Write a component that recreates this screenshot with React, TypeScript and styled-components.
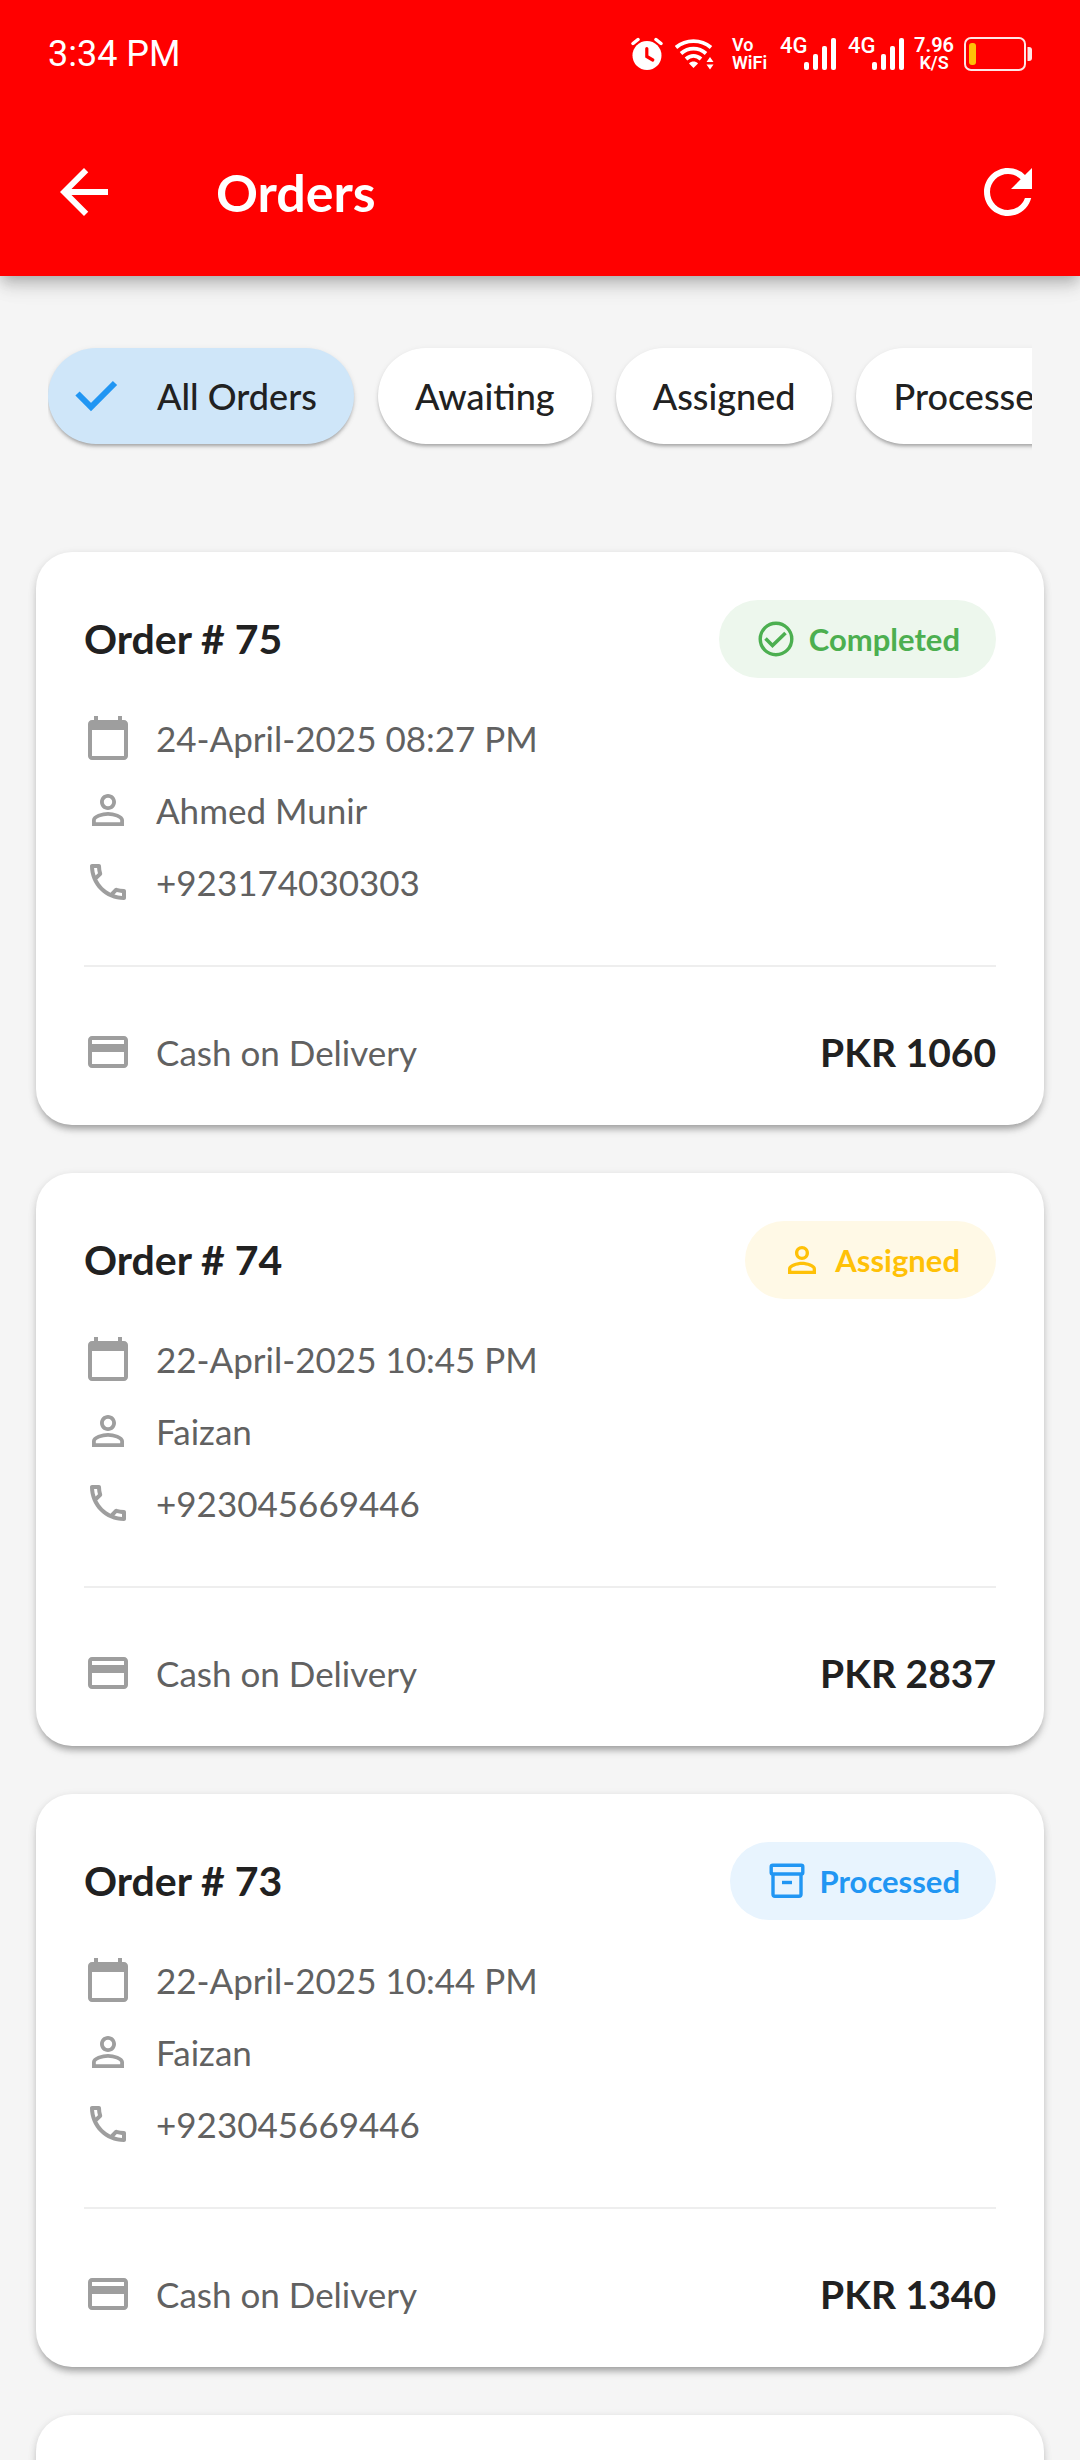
import React, { useState } from 'react';
import styled, { createGlobalStyle } from 'styled-components';
import {
  MdArrowBack,
  MdCalendarToday,
  MdRefresh,
} from 'react-icons/md';

const GlobalStyle = createGlobalStyle`
  *, *::before, *::after { box-sizing: border-box; }
  body {
    margin: 0;
    background: #f5f5f5;
    color: #212121;
    font-family: Lato, "Liberation Sans", sans-serif;
  }
  button { font: inherit; color: inherit; border: 0; padding: 0; background: none; cursor: pointer; }
  h1, h2, p { margin: 0; }
  svg { display: block; flex: none; }
`;

const Screen = styled.div`
  display: flex;
  flex-direction: column;
  height: 100vh;
  overflow: hidden;
`;

const AppBar = styled.header`
  position: relative;
  z-index: 1;
  flex: none;
  background: #ff0000;
  color: #fff;
  box-shadow:
    0 6px 12px -3px rgba(0, 0, 0, 0.2),
    0 12px 15px 0 rgba(0, 0, 0, 0.1),
    0 3px 30px 0 rgba(0, 0, 0, 0.08);
`;

const StatusBar = styled.div`
  display: flex;
  align-items: center;
  justify-content: space-between;
  height: 108px;
  padding: 0 48px;
  font-family: Roboto, "Liberation Sans", sans-serif;
`;

const Clock = styled.time`
  font-size: 36px;
  line-height: 48px;
`;

const StatusIcons = styled.div`
  display: flex;
  align-items: center;
  gap: 12px;
`;

const Stacked = styled.div<{ $align: 'flex-start' | 'center' }>`
  display: flex;
  flex-direction: column;
  align-items: ${({ $align }) => $align};
  width: 36px;
  white-space: nowrap;
  font-weight: 600;
`;

const StackedLine = styled.span<{ $size: number }>`
  font-size: ${({ $size }) => $size}px;
  line-height: 18px;
`;

const Signal = styled.div`
  display: flex;
  align-items: flex-start;
  width: 56px;
  height: 34px;
`;

const SignalLabel = styled.span`
  width: 24px;
  font-size: 22px;
  font-weight: 500;
  line-height: 18px;
`;

const Toolbar = styled.div`
  display: flex;
  align-items: center;
  gap: 96px;
  height: 168px;
  padding: 0 36px 0 48px;
`;

const ToolbarTitle = styled.h1`
  flex: 1;
  font-size: 52px;
  font-weight: 700;
  line-height: 60px;
`;

const IconButton = styled.button`
  flex: none;
  font-size: 72px;
`;

const Filters = styled.div`
  display: flex;
  flex: none;
  gap: 24px;
  margin: 0 48px;
  padding: 72px 0 60px;
  overflow-x: auto;
  scrollbar-width: none;
`;

const Chip = styled.button<{ $selected: boolean }>`
  display: flex;
  flex: none;
  align-items: center;
  gap: 37px;
  height: 96px;
  padding: 0 ${({ $selected }) => ($selected ? '37px 0 24px' : '37px')};
  border-radius: 48px;
  background: ${({ $selected }) => ($selected ? '#cfe6f9' : '#fff')};
  box-shadow:
    0 3px 3px -1px rgba(0, 0, 0, 0.2),
    0 3px 4px 0 rgba(0, 0, 0, 0.1),
    0 1px 6px 0 rgba(0, 0, 0, 0.06);
  font-size: 36px;
  font-weight: 500;
  line-height: 48px;
`;

const OrderList = styled.main`
  display: flex;
  flex: 1;
  flex-direction: column;
  gap: 48px;
  min-height: 0;
  padding: 48px 36px;
  overflow-y: auto;
  scrollbar-width: none;
`;

const Card = styled.article`
  flex: none;
  min-height: 573px;
  padding: 48px;
  border-radius: 36px;
  background: #fff;
  box-shadow:
    0 7px 6px -4px rgba(0, 0, 0, 0.22),
    0 5px 8px 0 rgba(0, 0, 0, 0.13),
    0 2px 10px 0 rgba(0, 0, 0, 0.08);
`;

const CardHeader = styled.div`
  display: flex;
  align-items: center;
  justify-content: space-between;
  height: 78px;
`;

const OrderTitle = styled.h2`
  font-size: 41px;
  font-weight: 700;
  line-height: 48px;
`;

const Badge = styled.span<{ $color: string; $tint: string }>`
  display: flex;
  align-items: center;
  gap: 12px;
  height: 78px;
  padding: 0 36px;
  border-radius: 39px;
  background: ${({ $tint }) => $tint};
  color: ${({ $color }) => $color};
  font-size: 31px;
  font-weight: 700;
  line-height: 48px;
`;

const Details = styled.div`
  display: flex;
  flex-direction: column;
  gap: 24px;
  margin: 36px 0 59px;
`;

const Detail = styled.p`
  display: flex;
  align-items: center;
  gap: 24px;
  color: #616161;
  font-size: 35px;
  line-height: 48px;

  svg {
    color: #9e9e9e;
    font-size: 48px;
  }
`;

const CardFooter = styled.div`
  display: flex;
  align-items: center;
  justify-content: space-between;
  height: 112px;
  padding-top: 60px;
  border-top: 2px solid #eeeeee;
`;

const Price = styled.strong`
  font-size: 39px;
  font-weight: 700;
  line-height: 48px;
`;

function PersonIcon({ size = 48 }: { size?: number }) {
  return (
    <svg width={size} height={size} viewBox="0 0 24 24" fill="currentColor" aria-hidden="true">
      <path d="M12 5.9a2.1 2.1 0 1 1 0 4.2 2.1 2.1 0 0 1 0-4.2m0 9c2.97 0 6.1 1.46 6.1 2.1v1.1H5.9V17c0-.64 3.13-2.1 6.1-2.1M12 4C9.79 4 8 5.79 8 8s1.79 4 4 4 4-1.79 4-4-1.79-4-4-4zm0 9c-2.67 0-8 1.34-8 4v3h16v-3c0-2.66-5.33-4-8-4z" />
    </svg>
  );
}

function PhoneIcon() {
  return (
    <svg width="48" height="48" viewBox="0 0 24 24" fill="currentColor" aria-hidden="true">
      <path d="M6.54 5c.06.89.21 1.76.45 2.59l-1.2 1.2c-.41-1.2-.67-2.47-.76-3.79h1.51m9.86 12.02c.85.24 1.72.39 2.6.45v1.49c-1.32-.09-2.59-.35-3.8-.75l1.2-1.19M7.5 3H4c-.55 0-1 .45-1 1 0 9.39 7.61 17 17 17 .55 0 1-.45 1-1v-3.49c0-.55-.45-1-1-1-1.24 0-2.45-.2-3.57-.57-.1-.04-.21-.05-.31-.05-.26 0-.51.1-.71.29l-2.2 2.2c-2.83-1.45-5.15-3.76-6.59-6.59l2.2-2.2c.28-.28.36-.67.25-1.02C8.7 6.45 8.5 5.25 8.5 4c0-.55-.45-1-1-1z" />
    </svg>
  );
}

function CardIcon() {
  return (
    <svg width="48" height="48" viewBox="0 0 24 24" fill="currentColor" aria-hidden="true">
      <path d="M20 4H4c-1.11 0-1.99.89-1.99 2L2 18c0 1.11.89 2 2 2h16c1.11 0 2-.89 2-2V6c0-1.11-.89-2-2-2zm0 14H4v-6h16v6zm0-10H4V6h16v2z" />
    </svg>
  );
}

function CompletedIcon() {
  return (
    <svg width="42" height="42" viewBox="0 0 42 42" fill="none" stroke="currentColor" aria-hidden="true">
      <circle cx="21" cy="21" r="15.8" strokeWidth="3.4" />
      <path d="M10.5 20.5l7 7L30.5 15" strokeWidth="3.6" />
    </svg>
  );
}

function ArchiveIcon() {
  return (
    <svg width="42" height="42" viewBox="0 0 42 42" fill="none" stroke="currentColor" strokeWidth="3.4" aria-hidden="true">
      <rect x="5.2" y="5.2" width="31.6" height="8.8" rx="1.6" />
      <path d="M7 14v20.2c0 1.2.8 2 2 2h24c1.2 0 2-.8 2-2V14" />
      <path d="M16 22.5h10" />
    </svg>
  );
}

function TickIcon() {
  return (
    <svg width="48" height="48" viewBox="0 0 48 48" fill="none" stroke="#2196f3" strokeWidth="6" aria-hidden="true">
      <path d="M5.5 21.5L19 35l24-24" />
    </svg>
  );
}

function AlarmIcon() {
  return (
    <svg width="32" height="34" viewBox="0 0 32 34" fill="none" stroke="#fff" strokeLinecap="round" aria-hidden="true">
      <circle cx="16" cy="18.5" r="14.5" fill="#fff" stroke="none" />
      <path d="M2 6.5l5-4M30 6.500l-5-4" strokeWidth="3.5" />
      <path d="M15.8 11.5v8l6 3.5" stroke="#ff0000" strokeWidth="3.2" />
    </svg>
  );
}

function WifiIcon() {
  return (
    <svg width="45" height="34" viewBox="0 0 45 34" fill="none" stroke="#fff" strokeWidth="3.8" aria-hidden="true">
      <path d="M1 10.5C11 2 26 2 36 10.5" />
      <path d="M6 16.5c7.5-6.5 17.5-6.5 25 0" />
      <path d="M11 22c4.5-4.2 10.5-4.2 15 0" />
      <path d="M14 26.5c2.5-2.6 6.5-2.6 9 0L18.5 31z" fill="#fff" stroke="none" />
      <path d="M31.5 25l3.500-5 3.500 5zM31.5 27.5l3.500 5 3.500-5z" fill="#fff" stroke="none" />
    </svg>
  );
}

function SignalBars() {
  return (
    <svg width="32" height="34" viewBox="0 0 32 34" fill="#fff" aria-hidden="true">
      <rect x="0" y="25" width="5" height="8" rx="2" />
      <rect x="9" y="17" width="5" height="16" rx="2" />
      <rect x="18" y="9" width="5" height="24" rx="2" />
      <rect x="27" y="1" width="5" height="32" rx="2" />
    </svg>
  );
}

function BatteryIcon() {
  return (
    <svg width="68" height="34" viewBox="0 0 68 34" fill="none" aria-hidden="true">
      <rect x="1" y="1" width="60" height="32" rx="6" stroke="#fff" strokeOpacity="0.9" strokeWidth="2" />
      <path d="M63.5 10h1.500q3 0 3 3v8q0 3-3 3h-1.500z" fill="#fff" fillOpacity="0.9" />
      <rect x="5" y="6" width="7" height="22" rx="3" fill="#ffc107" />
    </svg>
  );
}

type Status = 'Completed' | 'Assigned' | 'Processed';

interface Order {
  id: number;
  status: Status;
  date: string;
  customer: string;
  phone: string;
  total: number;
}

const statusStyles: Record<Status, { color: string; tint: string; icon: React.ReactNode }> = {
  Completed: { color: '#4caf50', tint: '#edf7ed', icon: <CompletedIcon /> },
  Assigned: { color: '#ffc107', tint: '#fff9e6', icon: <PersonIcon size={42} /> },
  Processed: { color: '#2196f3', tint: '#e8f4fe', icon: <ArchiveIcon /> },
};

const filters = ['All Orders', 'Awaiting', 'Assigned', 'Processed'];

const orders: Order[] = [
  { id: 75, status: 'Completed', date: '24-April-2025 08:27 PM', customer: 'Ahmed Munir', phone: '+923174030303', total: 1060 },
  { id: 74, status: 'Assigned', date: '22-April-2025 10:45 PM', customer: 'Faizan', phone: '+923045669446', total: 2837 },
  { id: 73, status: 'Processed', date: '22-April-2025 10:44 PM', customer: 'Faizan', phone: '+923045669446', total: 1340 },
];

function OrderCard({ order }: { order: Order }) {
  const { color, tint, icon } = statusStyles[order.status];
  return (
    <Card>
      <CardHeader>
        <OrderTitle>Order # {order.id}</OrderTitle>
        <Badge $color={color} $tint={tint}>
          {icon}
          {order.status}
        </Badge>
      </CardHeader>
      <Details>
        <Detail><MdCalendarToday />{order.date}</Detail>
        <Detail><PersonIcon />{order.customer}</Detail>
        <Detail><PhoneIcon />{order.phone}</Detail>
      </Details>
      <CardFooter>
        <Detail><CardIcon />Cash on Delivery</Detail>
        <Price>PKR {order.total}</Price>
      </CardFooter>
    </Card>
  );
}

function MobileSignal() {
  return (
    <Signal>
      <SignalLabel>4G</SignalLabel>
      <SignalBars />
    </Signal>
  );
}

export default function App() {
  const [selected, setSelected] = useState(filters[0]);

  return (
    <Screen>
      <GlobalStyle />
      <AppBar>
        <StatusBar>
          <Clock>3:34 PM</Clock>
          <StatusIcons>
            <AlarmIcon />
            <WifiIcon />
            <Stacked $align="flex-start">
              <StackedLine $size={18}>Vo</StackedLine>
              <StackedLine $size={18}>WiFi</StackedLine>
            </Stacked>
            <MobileSignal />
            <MobileSignal />
            <Stacked $align="center">
              <StackedLine $size={20}>7.96</StackedLine>
              <StackedLine $size={18}>K/S</StackedLine>
            </Stacked>
            <BatteryIcon />
          </StatusIcons>
        </StatusBar>
        <Toolbar>
          <IconButton type="button" aria-label="Back"><MdArrowBack /></IconButton>
          <ToolbarTitle>Orders</ToolbarTitle>
          <IconButton type="button" aria-label="Refresh"><MdRefresh /></IconButton>
        </Toolbar>
      </AppBar>
      <Filters>
        {filters.map((name) => (
          <Chip
            key={name}
            type="button"
            aria-pressed={name === selected}
            $selected={name === selected}
            onClick={() => setSelected(name)}
          >
            {name === selected && <TickIcon />}
            {name}
          </Chip>
        ))}
      </Filters>
      <OrderList>
        {orders.map((order) => (
          <OrderCard key={order.id} order={order} />
        ))}
        <Card aria-hidden="true" />
      </OrderList>
    </Screen>
  );
}
